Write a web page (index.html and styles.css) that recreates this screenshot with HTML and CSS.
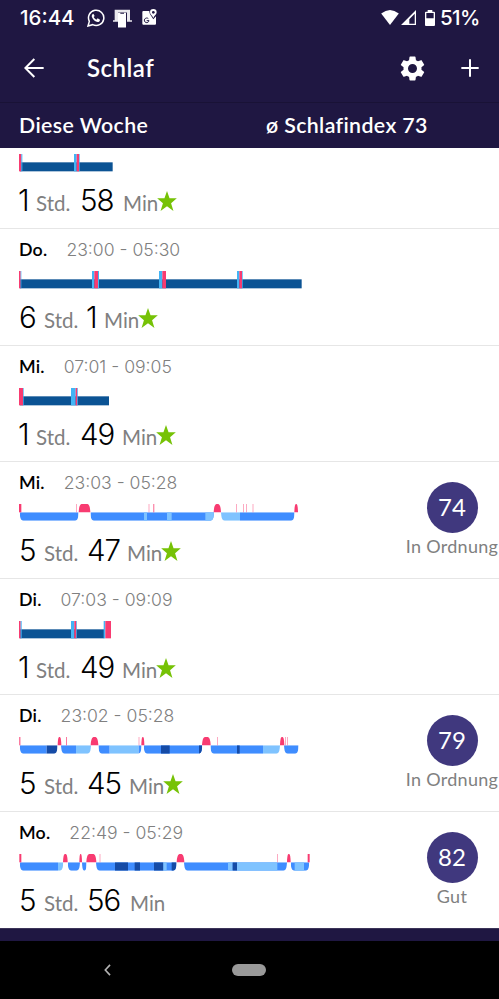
FILE: index.html
```html
<!DOCTYPE html>
<html lang="de">
<head>
<meta charset="utf-8">
<title>Schlaf</title>
<link rel="stylesheet" href="styles.css">
</head>
<body>
<div class="phone">
  <div class="status">
    <span class="clock">16:44</span>
    <svg class="ic-wa" viewBox="0 0 54 54"><path d="M3 51l4-14A23 23 0 1 1 17 47z" fill="none" stroke="#fff" stroke-width="4.5"/><path d="M19 14c-4 2-6 6-4 11 3 8 10 14 17 14 4 0 7-3 7-7l-7-4-4 4c-4-2-6-5-8-8l3-3z" fill="#fff"/></svg>
    <svg class="ic-dock" viewBox="0 0 57 56"><path d="M5 2h46v31h6v5H42V10H15v28H0v-5h5z" fill="#fff" opacity=".9"/><path d="M15 11h7v3h11v-3h6v44H15z" fill="#fff"/></svg>
    <svg class="ic-map" viewBox="0 0 45 48"><path d="M4 6h18c0 9 5 13 12 25l8-9v22q0 3-3 3H4q-3 0-3-3V9q0-3 3-3z" fill="#fff"/><path d="M34 0a10 10 0 0 1 10 10c0 7-7 9-10 17-3-8-10-10-10-17A10 10 0 0 1 34 0z" fill="#fff"/><circle cx="34" cy="10" r="4" fill="#1f1742"/><path d="M19 29a7 7 0 1 0 2 6h-7" fill="none" stroke="#1f1742" stroke-width="3"/></svg>
    <span class="spacer"></span>
    <svg class="ic-wifi" viewBox="0 0 54 46"><path d="M0 11Q27-11 54 11L27 46z" fill="#fff"/></svg>
    <svg class="ic-signal" viewBox="0 0 47 47"><path fill-rule="evenodd" d="M47 0v47H0zM43 12L26 29v14h17z" fill="#fff"/></svg>
    <svg class="ic-bat" viewBox="0 0 30 48"><path fill-rule="evenodd" d="M8 0h14v5h5q3 0 3 3v37q0 3-3 3H3q-3 0-3-3V8q0-3 3-3h5zM4 9v16h22V9z" fill="#fff"/></svg>
    <span class="percent">51%</span>
  </div>
  <header class="appbar">
    <svg class="ic-back" viewBox="0 0 60 60"><path d="M31 3L4 30l27 27M4 30h55" fill="none" stroke="#fff" stroke-width="6"/></svg>
    <h1>Schlaf</h1>
    <svg class="ic-gear" viewBox="2 2 20 20"><path fill="#fff" d="M19.14 12.94c.04-.3.06-.61.06-.94s-.02-.64-.07-.94l2.03-1.58a.49.49 0 0 0 .12-.61l-1.92-3.32a.49.49 0 0 0-.59-.22l-2.39.96a7 7 0 0 0-1.62-.94l-.36-2.54a.48.48 0 0 0-.48-.41h-3.84a.48.48 0 0 0-.47.41l-.36 2.54c-.59.24-1.13.57-1.62.94l-2.39-.96a.48.48 0 0 0-.59.22L2.74 8.87a.48.48 0 0 0 .12.61l2.03 1.58c-.05.3-.09.63-.09.94s.02.64.07.94l-2.03 1.58a.49.49 0 0 0-.12.61l1.92 3.32c.12.22.37.29.59.22l2.39-.96c.5.38 1.03.7 1.62.94l.36 2.54c.05.24.24.41.48.41h3.84c.24 0 .44-.17.47-.41l.36-2.54a7 7 0 0 0 1.62-.94l2.39.96c.22.08.47 0 .59-.22l1.92-3.32a.48.48 0 0 0-.12-.61zM12 15.6a3.6 3.6 0 1 1 0-7.2 3.6 3.6 0 0 1 0 7.2z"/></svg>
    <svg class="ic-plus" viewBox="0 0 54 54"><path d="M27 1v52M1 27h52" stroke="#fff" stroke-width="6"/></svg>
  </header>
  <div class="week"><span class="week-name">Diese Woche</span><span class="week-index">ø Schlafindex 73</span></div>

  <main class="list">
    <section class="night partial">
      <svg class="chart" data-chart="do-nap"></svg>
      <div class="dur m58"><b class="one">1</b><span>Std.</span><b>58</b><span>Min</span><svg class="star" viewBox="0 0 58 59"><use href="#star"/></svg></div>
    </section>
    <section class="night">
      <div class="when"><strong>Do.</strong><span>23:00 - 05:30</span></div>
      <svg class="chart" data-chart="do"></svg>
      <div class="dur long m1"><b>6</b><span>Std.</span><b class="one">1</b><span>Min</span><svg class="star" viewBox="0 0 58 59"><use href="#star"/></svg></div>
    </section>
    <section class="night">
      <div class="when"><strong>Mi.</strong><span>07:01 - 09:05</span></div>
      <svg class="chart" data-chart="mi-nap"></svg>
      <div class="dur m49"><b class="one">1</b><span>Std.</span><b>49</b><span>Min</span><svg class="star" viewBox="0 0 58 59"><use href="#star"/></svg></div>
    </section>
    <section class="night">
      <div class="when"><strong>Mi.</strong><span>23:03 - 05:28</span></div>
      <svg class="chart" data-chart="mi"></svg>
      <div class="dur long m47"><b>5</b><span>Std.</span><b>47</b><span>Min</span><svg class="star" viewBox="0 0 58 59"><use href="#star"/></svg></div>
      <div class="score"><div class="disc">74</div><div class="grade">In Ordnung</div></div>
    </section>
    <section class="night">
      <div class="when"><strong>Di.</strong><span>07:03 - 09:09</span></div>
      <svg class="chart" data-chart="di-nap"></svg>
      <div class="dur m49"><b class="one">1</b><span>Std.</span><b>49</b><span>Min</span><svg class="star" viewBox="0 0 58 59"><use href="#star"/></svg></div>
    </section>
    <section class="night">
      <div class="when"><strong>Di.</strong><span>23:02 - 05:28</span></div>
      <svg class="chart" data-chart="di"></svg>
      <div class="dur long m45"><b>5</b><span>Std.</span><b>45</b><span>Min</span><svg class="star" viewBox="0 0 58 59"><use href="#star"/></svg></div>
      <div class="score"><div class="disc">79</div><div class="grade">In Ordnung</div></div>
    </section>
    <section class="night">
      <div class="when"><strong>Mo.</strong><span>22:49 - 05:29</span></div>
      <svg class="chart" data-chart="mo"></svg>
      <div class="dur long m56"><b>5</b><span>Std.</span><b>56</b><span>Min</span></div>
      <div class="score"><div class="disc">82</div><div class="grade">Gut</div></div>
    </section>
  </main>
  <div class="edge"></div>
  <nav class="nav">
    <svg class="nav-back" viewBox="0 0 22 36"><path d="M19 2L4 18l15 16" fill="none" stroke="#b4b4b4" stroke-width="5"/></svg>
    <span class="nav-home"></span>
  </nav>
</div>
<svg width="0" height="0" class="defs"><defs><path id="star" d="M29 0l7.5 21.5H58L41 36l7 23-19-14-19 14 7-23L0 21.5h21.5z" fill="#76c206"/></defs></svg>
<script src="charts.js"></script>
</body>
</html>
```
FILE: styles.css
```css
* { box-sizing: border-box; }
body { margin: 0; background: #000; font-family: Lato, "Open Sans", sans-serif; }
.phone { width: 499px; height: 999px; display: flex; flex-direction: column; overflow: hidden; background: #1f1742; color: #fff; }
.phone svg { display: block; flex: none; }
.defs { display: block; }

.status { height: 34px; flex: none; display: flex; align-items: center; padding: 1px 19px 0 20px; }
.clock { width: 67px; font-family: Inter, sans-serif; font-size: 20.5px; font-weight: 500; letter-spacing: 0; line-height: 34px; }
.ic-wa { width: 18px; height: 18px; }
.ic-dock { width: 19px; height: 19px; margin: 1px 0 0 8px; }
.ic-map { width: 15px; height: 16px; margin: -2px 0 0 10px; }
.spacer { flex: 1; }
.ic-wifi { width: 18px; height: 15px; }
.ic-signal { width: 15px; height: 15px; margin-left: 2px; }
.ic-bat { width: 10px; height: 16px; margin-left: 9px; }
.percent { width: 40px; margin-left: 5px; font-family: Inter, sans-serif; font-size: 20.5px; font-weight: 500; letter-spacing: -.6px; white-space: nowrap; }

.appbar { height: 68px; flex: none; display: flex; align-items: center; padding: 0 20px 0 24px; }
.ic-back { width: 20px; height: 20px; }
h1 { flex: 1; margin: -2px 0 0 43px; font-size: 24px; font-weight: 600; letter-spacing: .5px; }
.ic-gear { width: 25px; height: 25px; margin-right: 36px; }
.ic-plus { width: 18px; height: 18px; }

.week { height: 46px; flex: none; display: flex; align-items: center; padding: 0 0 2px 19px; border-top: 1px solid #191236; font-size: 21.3px; font-weight: 600; }
.week-name { width: 247px; letter-spacing: .4px; }
.week-index { letter-spacing: .38px; }

.list { height: 780px; flex: none; overflow: hidden; background: #fff; color: #000; }
.night { position: relative; height: 116.6px; padding-left: 19px; border-top: 1px solid #e6e6e6; }
.partial { height: 80px; padding-top: 6px; border-top: 0; }
.when { display: flex; gap: 19px; height: 42px; line-height: 41px; font-size: 17.8px; }
.when strong { font-weight: 600; letter-spacing: .2px; }
.when span { color: #808080; font-family: Inter, sans-serif; font-size: 17.6px; font-weight: 350; letter-spacing: 0; }
.chart { width: 300px; height: 18px; }
.dur { display: grid; grid-template-columns: 17px 44px var(--minutes) 33px 20px; align-items: baseline; height: 46px; line-height: 56px; }
.dur b { font-family: Inter, sans-serif; font-size: 29.5px; font-weight: 350; letter-spacing: -1px; }
.dur .one { margin-left: -1px; }
.dur span { font-size: 20.5px; color: #808080; }
.dur.long { grid-template-columns: 25px 43px var(--minutes) 33px 20px; }
.m58 { --minutes: 43px; }
.m49 { --minutes: 42px; }
.m1 { --minutes: 17px; }
.m47 { --minutes: 40px; }
.m45 { --minutes: 42px; }
.m56 { --minutes: 43px; }
.star { width: 20px; height: 20px; margin-left: 1px; }

.score { position: absolute; right: -3px; top: 20px; width: 100px; display: flex; flex-direction: column; align-items: center; }
.disc { width: 51px; height: 51px; border-radius: 50%; background: #40387e; color: #fff; font-size: 24px; line-height: 49px; text-align: center; }
.grade { margin-top: 1px; font-size: 18px; line-height: 24px; color: #808080; letter-spacing: .3px; white-space: nowrap; }

.edge { height: 13px; flex: none; background: #1f1742; border-top: 1px solid #3b3459; }
.nav { height: 58px; flex: none; display: flex; align-items: center; background: #000; padding-left: 104px; }
.nav-back { width: 7px; height: 12px; }
.nav-home { width: 34px; height: 12px; margin-left: 121px; border-radius: 6px; background: #999; }
```
FILE: charts.js
```js
const PINK = '#f83b71', SKY = '#42b4f5', NAVY = '#0b5394';
const LIGHT = '#7fc3ff', BLUE = '#3f8dff', DEEP = '#154ba6';
const L = LIGHT, B = BLUE, D = DEEP;

// Classic charts: end of the sleep bar, then full-height ticks [colour, from, to].
const classic = {
  'do-nap': [338, [PINK, 57, 64], [SKY, 64, 67], [SKY, 222, 230], [PINK, 230, 237], [SKY, 237, 239]],
  'do': [905, [PINK, 57, 62], [SKY, 62, 64], [SKY, 276, 283], [PINK, 283, 294], [SKY, 294, 297], [SKY, 477, 487], [PINK, 487, 498], [SKY, 711, 718], [PINK, 718, 726], [SKY, 726, 728]],
  'mi-nap': [327, [PINK, 57, 69], [SKY, 69, 71], [SKY, 213, 227], [PINK, 227, 232], [SKY, 232, 234]],
  'di-nap': [313, [PINK, 57, 62], [SKY, 62, 65], [SKY, 213, 223], [PINK, 223, 229], [SKY, 229, 231], [SKY, 311, 316], [PINK, 316, 333]]
};

// Stage charts: sleep blocks [from, to, colour runs], awake humps, thick and faint awake lines.
const stages = {
  'mi': {
    blocks: [[59, 236, [[B, 59, 236]]], [271, 642, [[B, 271, 642], [L, 432, 441], [L, 501, 515], [L, 616, 642]]], [663, 884, [[L, 663, 720], [B, 720, 884]]]],
    humps: [[236, 271], [641, 663], [883, 894]],
    bars: [[57, 64]], lines: [230, 447, 461, 462, 709, 731, 740, 759]
  },
  'di': {
    blocks: [[59, 173, [[B, 59, 140], [D, 140, 173]]], [183, 273, [[B, 183, 228], [L, 228, 273]]], [295, 425, [[B, 295, 329], [L, 329, 416], [B, 416, 425]]], [431, 607, [[B, 431, 607], [D, 483, 509], [D, 597, 607]]], [631, 840, [[B, 631, 789], [D, 711, 719], [L, 789, 840]]], [852, 896, [[B, 852, 896]]]],
    humps: [[173, 184], [272, 295], [424, 433], [606, 632], [840, 853]],
    bars: [[58, 61]], lines: [199, 200, 417, 652, 857, 862]
  },
  'mo': {
    blocks: [[59, 190, [[B, 59, 174], [L, 174, 190]]], [203, 240, [[B, 203, 240]]], [246, 260, [[B, 246, 260]]], [288, 530, [[B, 288, 530], [D, 345, 384], [D, 404, 420], [D, 462, 490], [L, 490, 500], [D, 515, 530]]], [552, 861, [[B, 552, 861], [L, 684, 698], [D, 698, 711], [L, 711, 832]]], [872, 928, [[B, 872, 928], [L, 884, 912]]]],
    humps: [[189, 203], [238, 246], [259, 289], [530, 553], [861, 872]],
    bars: [[58, 64], [923, 929]], lines: [300, 832]
  }
};

const rect = (fill, a, b, y, h, o = 1) =>
  `<rect x="${a}" y="${y}" width="${b - a}" height="${h}" fill="${fill}" opacity="${o}"/>`;

// Rounded hump or trough: starts on the middle line and bends by dy.
function bend(a, b, y, dy) {
  const r = Math.min(11, (b - a) / 2);
  return `M${a} ${y}C${a + r * .1} ${y + dy * .7} ${a + r * .3} ${y + dy} ${a + r} ${y + dy}H${b - r}C${b - r * .3} ${y + dy} ${b - r * .1} ${y + dy * .7} ${b} ${y}z`;
}

document.querySelectorAll('[data-chart]').forEach(svg => {
  const key = svg.dataset.chart;
  svg.setAttribute('viewBox', '57 0 900 54');
  let out = '';
  if (classic[key]) {
    const [end, ...ticks] = classic[key];
    out += rect(NAVY, 60, end, 25, 27);
    ticks.forEach(([c, a, b]) => { out += rect(c, a, b, 0, 52); });
  } else {
    const s = stages[key];
    s.blocks.forEach(([a, b, runs], i) => {
      const id = `${key}-${i}`;
      out += `<clipPath id="${id}"><path d="${bend(a, b, 25, 25)}"/></clipPath><g clip-path="url(#${id})">`;
      runs.forEach(([c, x, y]) => { out += rect(c, x, y, 24, 27); });
      out += '</g>';
    });
    s.humps.forEach(([a, b]) => { out += `<path d="${bend(a, b, 25, -25)}" fill="${PINK}"/>`; });
    s.bars.forEach(([a, b]) => { out += rect(PINK, a, b, 0, 25); });
    s.lines.forEach(x => { out += rect(PINK, x - 1, x + 1, 0, 25, .65); });
  }
  svg.innerHTML = out;
});
```
